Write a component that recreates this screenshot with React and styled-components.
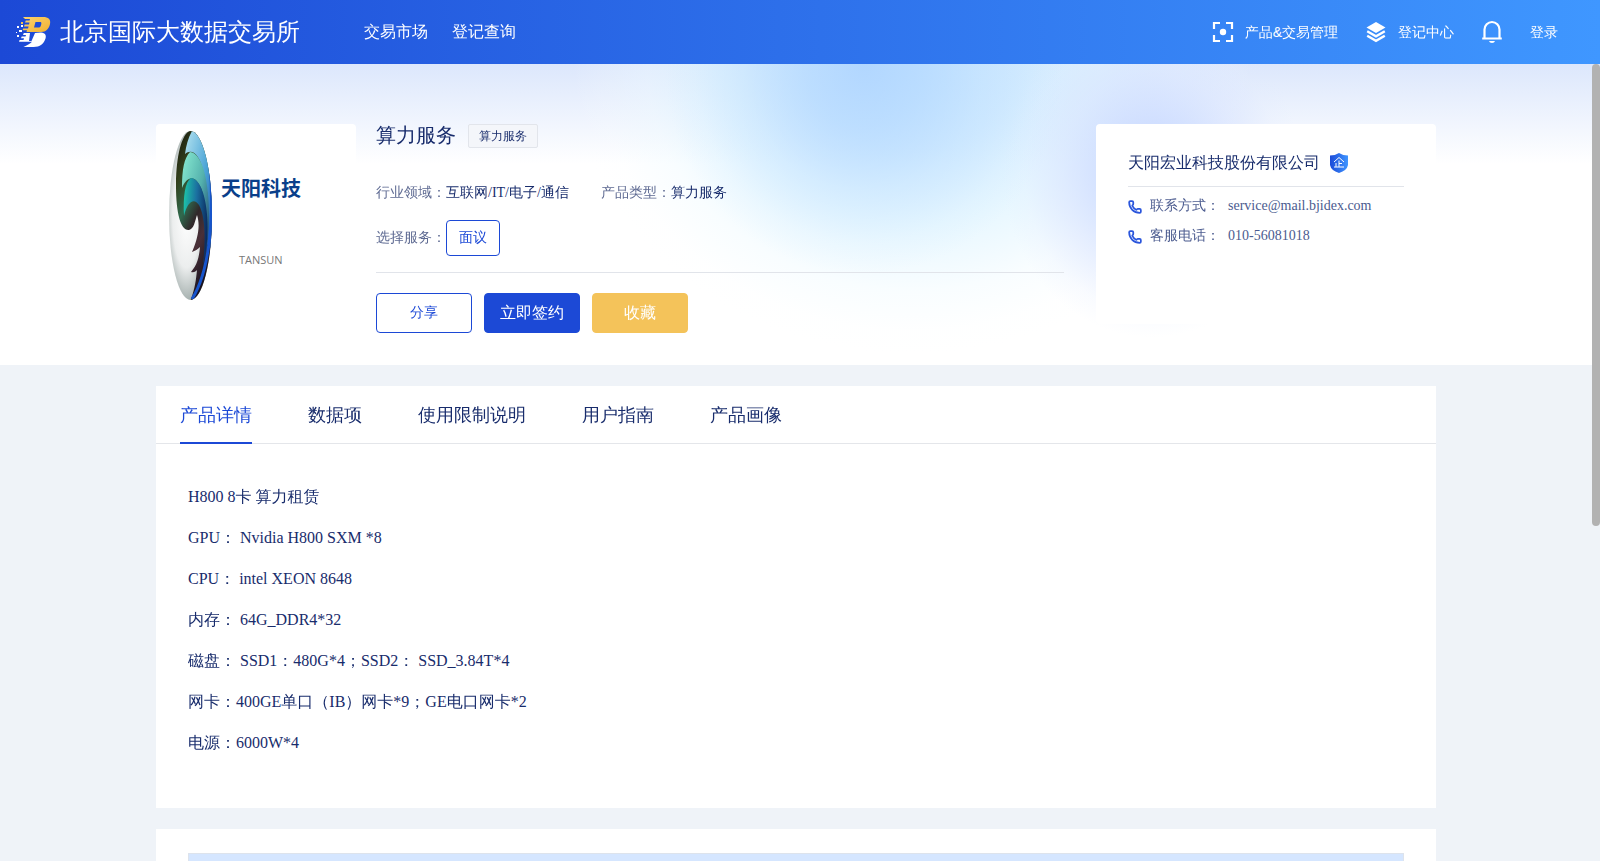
import React, { useState } from 'react'
import styled, { createGlobalStyle } from 'styled-components'
import { Phone } from 'lucide-react'

const tabs = ['产品详情', '数据项', '使用限制说明', '用户指南', '产品画像']

const details = [
    'H800 8卡 算力租赁',
    'GPU： Nvidia H800 SXM *8',
    'CPU： intel XEON 8648',
    '内存： 64G_DDR4*32',
    '磁盘： SSD1：480G*4；SSD2： SSD_3.84T*4',
    '网卡：400GE单口（IB）网卡*9；GE电口网卡*2',
    '电源：6000W*4',
]

function BrandLogo() {
    return (
        <svg width="36" height="32" viewBox="0 0 36 32" aria-hidden="true">
            <defs>
                <linearGradient id="gold" x1="0" y1="0" x2="1" y2="1">
                    <stop offset="0" stopColor="#fbd370" />
                    <stop offset="1" stopColor="#f0b030" />
                </linearGradient>
            </defs>
            <path
                fill="#fff"
                d="M25 16.500C29.500 17 30.500 19.500 29.500 22.500C28 27.500 24 31 17.500 31H7.500C11 29.500 14 28 16 25.800H3L3.600 24H7.500L8 22.300H5L5.700 20.500H9.500L10 19H7L7.800 17H14L13 25H15.500L19 17Z"
            />
            <path
                fill="url(#gold)"
                fillRule="evenodd"
                d="M7 1H27C32.500 1 35 3.500 34 8C33 12.500 30 16 25 16H10.500L11 14.200H6.500L7.200 12.500H12L12.600 10.500H8L8.700 8.500H13L13.500 6.500H9L9.800 4.500H13.500L14 3H9ZM19.500 6L18 11.500H22.500C23.800 11.500 24.500 11 24.900 9.500L25.300 8C25.600 6.600 25.200 6 24 6Z"
            />
            <g fill="#fff">
                <rect x="1" y="10" width="2" height="2" />
                <rect x="5" y="9" width="2" height="2" />
                <rect x="3" y="14" width="3" height="2" />
                <rect x="0" y="16" width="1" height="1" />
                <rect x="1" y="19" width="2" height="2" />
            </g>
            <rect x="5" y="6" width="2" height="2" fill="#f7c04a" />
        </svg>
    )
}

function ScanIcon() {
    return (
        <svg width="24" height="24" viewBox="0 0 24 24" aria-hidden="true">
            <path
                d="M3 9V3H9M15 3H21V9M21 15V21H15M9 21H3V15"
                fill="none"
                stroke="#fff"
                strokeWidth="2.200"
            />
            <circle cx="12" cy="12" r="3.200" fill="#fff" />
        </svg>
    )
}

function LayersIcon() {
    return (
        <svg width="24" height="24" viewBox="0 0 24 24" aria-hidden="true">
            <path d="M12 2L21.500 7.500L12 13L2.500 7.500Z" fill="#fff" />
            <path
                d="M3.200 11.200L12 16.300L20.800 11.200M3.200 15.700L12 20.800L20.800 15.700"
                fill="none"
                stroke="#fff"
                strokeWidth="2.400"
            />
        </svg>
    )
}

function BellIcon() {
    return (
        <svg width="24" height="24" viewBox="0 0 24 24" aria-hidden="true">
            <path d="M4.500 18.500V9.500A7.500 7.500 0 0 1 19.500 9.500V18.500M2.200 18.500H21.800" fill="none" stroke="#fff" strokeWidth="2.200" />
            <path d="M9 21H15Q14.500 23 12 23Q9.500 23 9 21Z" fill="#fff" />
        </svg>
    )
}

function ShieldIcon() {
    return (
        <svg width="20" height="22" viewBox="0 0 20 22" aria-hidden="true">
            <defs>
                <linearGradient id="shield" x1="0" y1="0" x2="1" y2="0">
                    <stop offset="0" stopColor="#1c4bd8" />
                    <stop offset="1" stopColor="#3f95ff" />
                </linearGradient>
            </defs>
            <path d="M10 1Q14 3.500 19 3.600V13Q18 18.500 10 21Q2 18.500 1 13V3.600Q6 3.500 10 1Z" fill="url(#shield)" />
            <path
                d="M5 10L10 5.500L15 10M10 8.500V14.800M10 11.500H13M7 11V14.800M5 15H15"
                fill="none"
                stroke="#fff"
                strokeWidth="1"
            />
        </svg>
    )
}

function TansunLogo() {
    return (
        <svg width="200" height="200" viewBox="0 0 200 200" role="img" aria-label="天阳科技">
            <defs>
                <radialGradient id="pearl" cx="0.4" cy="0.5" r="0.6">
                    <stop offset="0" stopColor="#ffffff" />
                    <stop offset="0.5" stopColor="#eceeee" />
                    <stop offset="1" stopColor="#7f8f8c" />
                </radialGradient>
                <linearGradient id="dark" x1="0" y1="0" x2="0.5" y2="1">
                    <stop offset="0" stopColor="#15140c" />
                    <stop offset="0.25" stopColor="#33401c" />
                    <stop offset="0.45" stopColor="#2f6a4e" />
                    <stop offset="0.6" stopColor="#30282a" />
                    <stop offset="0.75" stopColor="#4a3038" />
                    <stop offset="1" stopColor="#14101c" />
                </linearGradient>
                <linearGradient id="sky" x1="0" y1="0" x2="1" y2="1">
                    <stop offset="0" stopColor="#b5e4f0" />
                    <stop offset="0.5" stopColor="#4aa3d6" />
                    <stop offset="1" stopColor="#123f9c" />
                </linearGradient>
                <linearGradient id="mint" x1="0" y1="0" x2="1" y2="1">
                    <stop offset="0" stopColor="#8aecd2" />
                    <stop offset="0.5" stopColor="#54b1ad" />
                    <stop offset="1" stopColor="#0e2d66" />
                </linearGradient>
                <linearGradient id="teal" x1="0" y1="0.3" x2="1" y2="0.5">
                    <stop offset="0" stopColor="#1dc1a8" />
                    <stop offset="0.5" stopColor="#1b6fa0" />
                    <stop offset="1" stopColor="#0a2a5e" />
                </linearGradient>
                <clipPath id="egg">
                    <ellipse cx="34.500" cy="91.500" rx="21.500" ry="84.500" />
                </clipPath>
            </defs>
            <g clipPath="url(#egg)">
                <rect x="12" y="6" width="46" height="172" fill="url(#pearl)" />
                <path
                    d="M35 6C24 10 20 38 20 62C20 90 25 107 33 106C38 105 39 97 41 91C44 100 43 112 36 128C39 127 42 125 44 123C43 134 41 141 35 148C38 149 40 147 41 146C40 156 39 165 34 178H60V6Z"
                    fill="url(#dark)"
                />
                <path d="M36 7C32 14 30 22 29 30C36 24 44 30 48 50C54 76 52 96 51 120L60 130V6Z" fill="url(#sky)" />
                <path d="M34 28C28 34 26 46 26 64C31 52 39 50 45 64C51 80 51 110 49 134C57 100 54 30 34 28Z" fill="url(#mint)" />
                <path d="M35 54C29 58 27 72 28 92C31 78 38 73 43 81C49 92 50 114 47 142C56 110 52 56 35 54Z" fill="url(#teal)" />
                <path d="M54 40C59 100 52 150 36 175" fill="none" stroke="#1654cc" strokeWidth="3" />
            </g>
            <LogoName x="65" y="72">天阳科技</LogoName>
            <LogoSub x="83" y="140">TANSUN</LogoSub>
        </svg>
    )
}

function App() {
    const [active, setActive] = useState(tabs[0])

    return (
        <Page>
            <GlobalStyle />
            <Header>
                <Brand href="#">
                    <BrandLogo />
                    <BrandName>北京国际大数据交易所</BrandName>
                </Brand>
                <Nav>
                    <NavLink href="#">交易市场</NavLink>
                    <NavLink href="#">登记查询</NavLink>
                </Nav>
                <UserBar>
                    <UserLink href="#"><ScanIcon />产品&amp;交易管理</UserLink>
                    <UserLink href="#"><LayersIcon />登记中心</UserLink>
                    <BellButton aria-label="消息"><BellIcon /></BellButton>
                    <UserLink href="#">登录</UserLink>
                </UserBar>
            </Header>

            <Body>
                <Scroller>
                    <Hero>
                        <HeroInner>
                            <Cover><TansunLogo /></Cover>
                            <Info>
                                <TitleRow>
                                    <Title>算力服务</Title>
                                    <Tag>算力服务</Tag>
                                </TitleRow>
                                <Attrs>
                                    <Attr>行业领域：<b>互联网/IT/电子/通信</b></Attr>
                                    <Attr>产品类型：<b>算力服务</b></Attr>
                                </Attrs>
                                <Service>
                                    选择服务：
                                    <Option>面议</Option>
                                </Service>
                                <Actions>
                                    <Action $outline>分享</Action>
                                    <Action $color="#1c49d6">立即签约</Action>
                                    <Action $color="#f4c35a">收藏</Action>
                                </Actions>
                            </Info>
                            <Company>
                                <CompanyName>天阳宏业科技股份有限公司<ShieldIcon /></CompanyName>
                                <Contact>
                                    <Phone size={14} strokeWidth={3} />
                                    <span>联系方式：</span>
                                    service@mail.bjidex.com
                                </Contact>
                                <Contact>
                                    <Phone size={14} strokeWidth={3} />
                                    <span>客服电话：</span>
                                    010-56081018
                                </Contact>
                            </Company>
                        </HeroInner>
                    </Hero>

                    <Main>
                        <Card>
                            <TabBar role="tablist">
                                {tabs.map((name) => (
                                    <Tab
                                        key={name}
                                        role="tab"
                                        aria-selected={name === active}
                                        $active={name === active}
                                        onClick={() => setActive(name)}
                                    >
                                        {name}
                                    </Tab>
                                ))}
                            </TabBar>
                            <Detail>
                                {details.map((line) => (
                                    <p key={line}>{line}</p>
                                ))}
                            </Detail>
                        </Card>
                        <Card>
                            <Panel>
                                <PanelHead />
                            </Panel>
                        </Card>
                    </Main>
                </Scroller>
                <ScrollThumb />
            </Body>
        </Page>
    )
}

export default App

const GlobalStyle = createGlobalStyle`
* {
    box-sizing: border-box;
}
body {
    margin: 0;
    color: #182c6c;
    font-family: "Liberation Serif", "WenQuanYi Zen Hei", "Droid Sans Fallback", "Noto Sans CJK TC", serif;
    font-size: 14px;
}
button {
    font-family: inherit;
    cursor: pointer;
}
a {
    color: inherit;
    text-decoration: none;
}
svg {
    display: block;
    flex-shrink: 0;
}
`

const Page = styled.div`
display: flex;
flex-direction: column;
height: 100vh;
`

const Header = styled.header`
display: flex;
align-items: center;
flex: none;
height: 64px;
padding: 0 42px 0 16px;
color: #fff;
background: linear-gradient(90deg, #1c49d6 0%, #3f97ff 100%);
white-space: nowrap;
`

const Brand = styled.a`
display: flex;
align-items: center;
gap: 8px;
`

const BrandName = styled.span`
font-size: 24px;
line-height: 32px;
`

const Nav = styled.nav`
display: flex;
gap: 24px;
margin-left: 64px;
`

const NavLink = styled.a`
font-size: 16px;
line-height: 24px;
`

const UserBar = styled.div`
display: flex;
align-items: center;
gap: 26px;
margin-left: auto;
font-family: "Liberation Sans", "WenQuanYi Zen Hei", "Droid Sans Fallback", "Noto Sans CJK TC", sans-serif;
`

const UserLink = styled.a`
display: flex;
align-items: center;
gap: 10px;
font-size: 14px;
line-height: 24px;
`

const BellButton = styled.button`
padding: 0;
border: none;
background: none;
`

const Body = styled.div`
position: relative;
flex: 1;
min-height: 0;
`

const Scroller = styled.div`
height: 100%;
padding-right: 8px;
overflow-y: auto;
background: #eff3f8;
scrollbar-width: none;
`

const ScrollThumb = styled.div`
position: absolute;
top: 0;
right: 0;
width: 8px;
height: 58%;
border-radius: 4px;
background: #b2b2b2;
`

const Hero = styled.section`
margin-right: -8px;
padding: 60px 8px 32px 0;
background:
    radial-gradient(ellipse 150px 165px at 72% 36%, #c8d9ff 0%, #cddcffe0 30%, #d6e2ff90 60%, #e0eaff30 85%, #e6eeff00 100%),
    radial-gradient(ellipse 200px 210px at 54% 0%, #acd3ffd0 0%, #b3d8ffb0 30%, #bcdeff60 60%, #c8e6ff20 85%, #c8e6ff00 100%),
    radial-gradient(ellipse 340px 290px at 57% 0%, #c8e6ff 0%, #cfeaffe0 30%, #dcf3ffb0 55%, #eefaff60 78%, #f8fdff20 92%, #ffffff00 100%),
    linear-gradient(180deg, #dce7fc 0, #ffffff 100px);
`

const HeroInner = styled.div`
display: flex;
align-items: flex-start;
max-width: 1280px;
margin: 0 auto;
`

const Cover = styled.div`
flex: none;
border-radius: 4px;
background: #fff;
overflow: hidden;
`

const LogoName = styled.text`
fill: #0a3f8a;
font-family: "Noto Sans CJK SC", sans-serif;
font-size: 20px;
font-weight: bold;
`

const LogoSub = styled.text`
fill: #777;
font-family: "Open Sans", sans-serif;
font-size: 11px;
`

const Info = styled.div`
flex: 1;
margin: 0 32px 0 20px;
`

const TitleRow = styled.div`
display: flex;
align-items: flex-start;
gap: 12px;
`

const Title = styled.h1`
margin: 0;
font-size: 20px;
font-weight: normal;
line-height: 22px;
`

const Tag = styled.span`
padding: 0 10px;
border: 1px solid #e2e5eb;
border-radius: 2px;
background: #f4f6fa;
font-size: 12px;
line-height: 22px;
`

const Attrs = styled.div`
display: flex;
gap: 32px;
margin-top: 34px;
line-height: 22px;
`

const Attr = styled.div`
color: #5e6a92;

b {
    color: #182c6c;
    font-weight: normal;
}
`

const Service = styled.div`
display: flex;
align-items: center;
margin-top: 16px;
padding-bottom: 16px;
border-bottom: 1px solid #e1e4ea;
color: #5e6a92;
`

const Option = styled.button`
height: 36px;
padding: 0 12px;
border: 1px solid #1c49d6;
border-radius: 4px;
background: #fff;
color: #1c49d6;
font-size: 14px;
`

const Actions = styled.div`
display: flex;
gap: 12px;
margin-top: 20px;
`

const Action = styled.button`
width: 96px;
height: 40px;
padding: 0;
border: 1px solid ${(p) => (p.$outline ? '#1c49d6' : p.$color)};
border-radius: 4px;
background: ${(p) => (p.$outline ? '#fff' : p.$color)};
color: ${(p) => (p.$outline ? '#1c49d6' : '#fff')};
font-size: ${(p) => (p.$outline ? 14 : 16)}px;
`

const Company = styled.aside`
flex: none;
width: 340px;
min-height: 200px;
padding: 28px 32px;
border-radius: 4px;
background: #fff;
`

const CompanyName = styled.div`
display: flex;
align-items: center;
gap: 9px;
margin-bottom: 4px;
padding-bottom: 12px;
border-bottom: 1px solid #e1e4ea;
font-size: 16px;
line-height: 22px;
`

const Contact = styled.div`
display: flex;
align-items: center;
gap: 8px;
color: #4b5b8f;
line-height: 30px;

svg {
    margin-top: 2px;
    color: #2a55dc;
}
`

const Main = styled.main`
display: flex;
flex-direction: column;
gap: 21px;
max-width: 1280px;
margin: 0 auto;
padding: 21px 0;
`

const Card = styled.section`
background: #fff;
`

const TabBar = styled.div`
display: flex;
gap: 56px;
padding: 0 24px;
border-bottom: 1px solid #e4e6ea;
`

const Tab = styled.button`
height: 58px;
margin-bottom: -1px;
padding: 2px 0 0;
border: none;
border-bottom: 2px solid ${(p) => (p.$active ? '#1c49d6' : 'transparent')};
background: none;
color: ${(p) => (p.$active ? '#1c49d6' : '#182c6c')};
font-size: 18px;
`

const Detail = styled.div`
padding: 24px 32px 37px;
font-size: 16px;
line-height: 25px;

p {
    margin: 16px 0;
}
`

const Panel = styled.div`
min-height: 540px;
padding: 24px 32px;
`

const PanelHead = styled.div`
height: 48px;
border: 1px solid #dde3ec;
background: #d5e6ff;
`
